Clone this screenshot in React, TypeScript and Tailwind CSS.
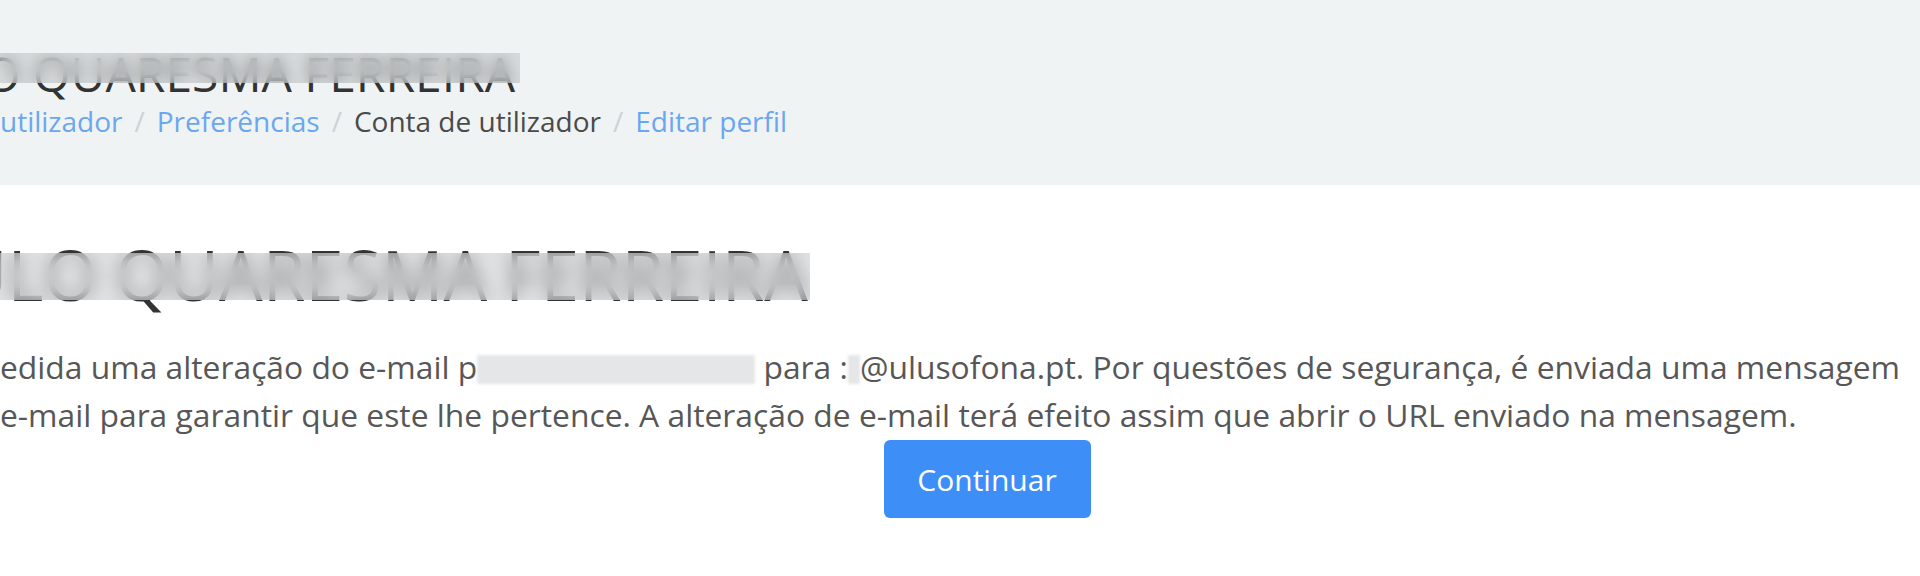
import React from 'react';

const crumbs = [
  { label: 'utilizador', link: true },
  { label: 'Preferências', link: true },
  { label: 'Conta de utilizador', link: false },
  { label: 'Editar perfil', link: true },
];

// soft grey box used to hide personal data
const Redact: React.FC<{ w: number }> = ({ w }) => (
  <span
    className="inline-block h-[29px] align-[-5px] bg-[#e4e6e7] blur-[1.5px]"
    style={{ width: w }}
  ></span>
);

export default function App() {
  return (
    <div className="w-[1920px] h-[576px] overflow-hidden bg-white font-['Open_Sans',sans-serif]">
      {/* Page header */}
      <header className="h-[185px] bg-[#eff3f4] pt-[47px]">
        <div className="relative">
          <h1 className="ml-[-136px] whitespace-nowrap text-[48px] leading-[53px] font-normal uppercase text-[#333]">
            Paulo Quaresma Ferreira
          </h1>
          <div className="absolute left-0 top-[6px] h-[30px] w-[520px] backdrop-blur-[7px] bg-[#bfc3c5]/55"></div>
        </div>
        <nav className="flex items-center text-[28px] leading-[42px] whitespace-nowrap">
          {crumbs.map((c, i) => (
            <React.Fragment key={c.label}>
              {i > 0 && <span className="px-[12px] text-[#cdd2d5]">/</span>}
              <span className={c.link ? 'text-[#6aa7ef]' : 'text-[#4a4a4a]'}>{c.label}</span>
            </React.Fragment>
          ))}
        </nav>
      </header>

      {/* Main content */}
      <main className="pt-[50px]">
        <div className="relative">
          <h2 className="ml-[-128px] whitespace-nowrap text-[69px] leading-[79px] font-normal uppercase text-[#333]">
            Paulo Quaresma Ferreira
          </h2>
          <div className="absolute left-0 top-[18px] h-[47px] w-[810px] backdrop-blur-[9px] bg-[#c4c8ca]/55"></div>
        </div>

        <div className="mt-[29px] text-[31.8px] leading-[48px] text-[#575757] whitespace-nowrap">
          <div>
            edida uma alteração do e-mail p<Redact w={278} /> para :<Redact w={12} />@ulusofona.pt. Por questões de segurança, é enviada uma mensagem
          </div>
          <div>
            e-mail para garantir que este lhe pertence. A alteração de e-mail terá efeito assim que abrir o URL enviado na mensagem.
          </div>
        </div>

        <div className="flex justify-center pl-[54px] mt-px">
          <button className="w-[207px] h-[78px] rounded-[6px] bg-[#3d8ef6] text-white text-[30px]">
            Continuar
          </button>
        </div>
      </main>
    </div>
  );
}
